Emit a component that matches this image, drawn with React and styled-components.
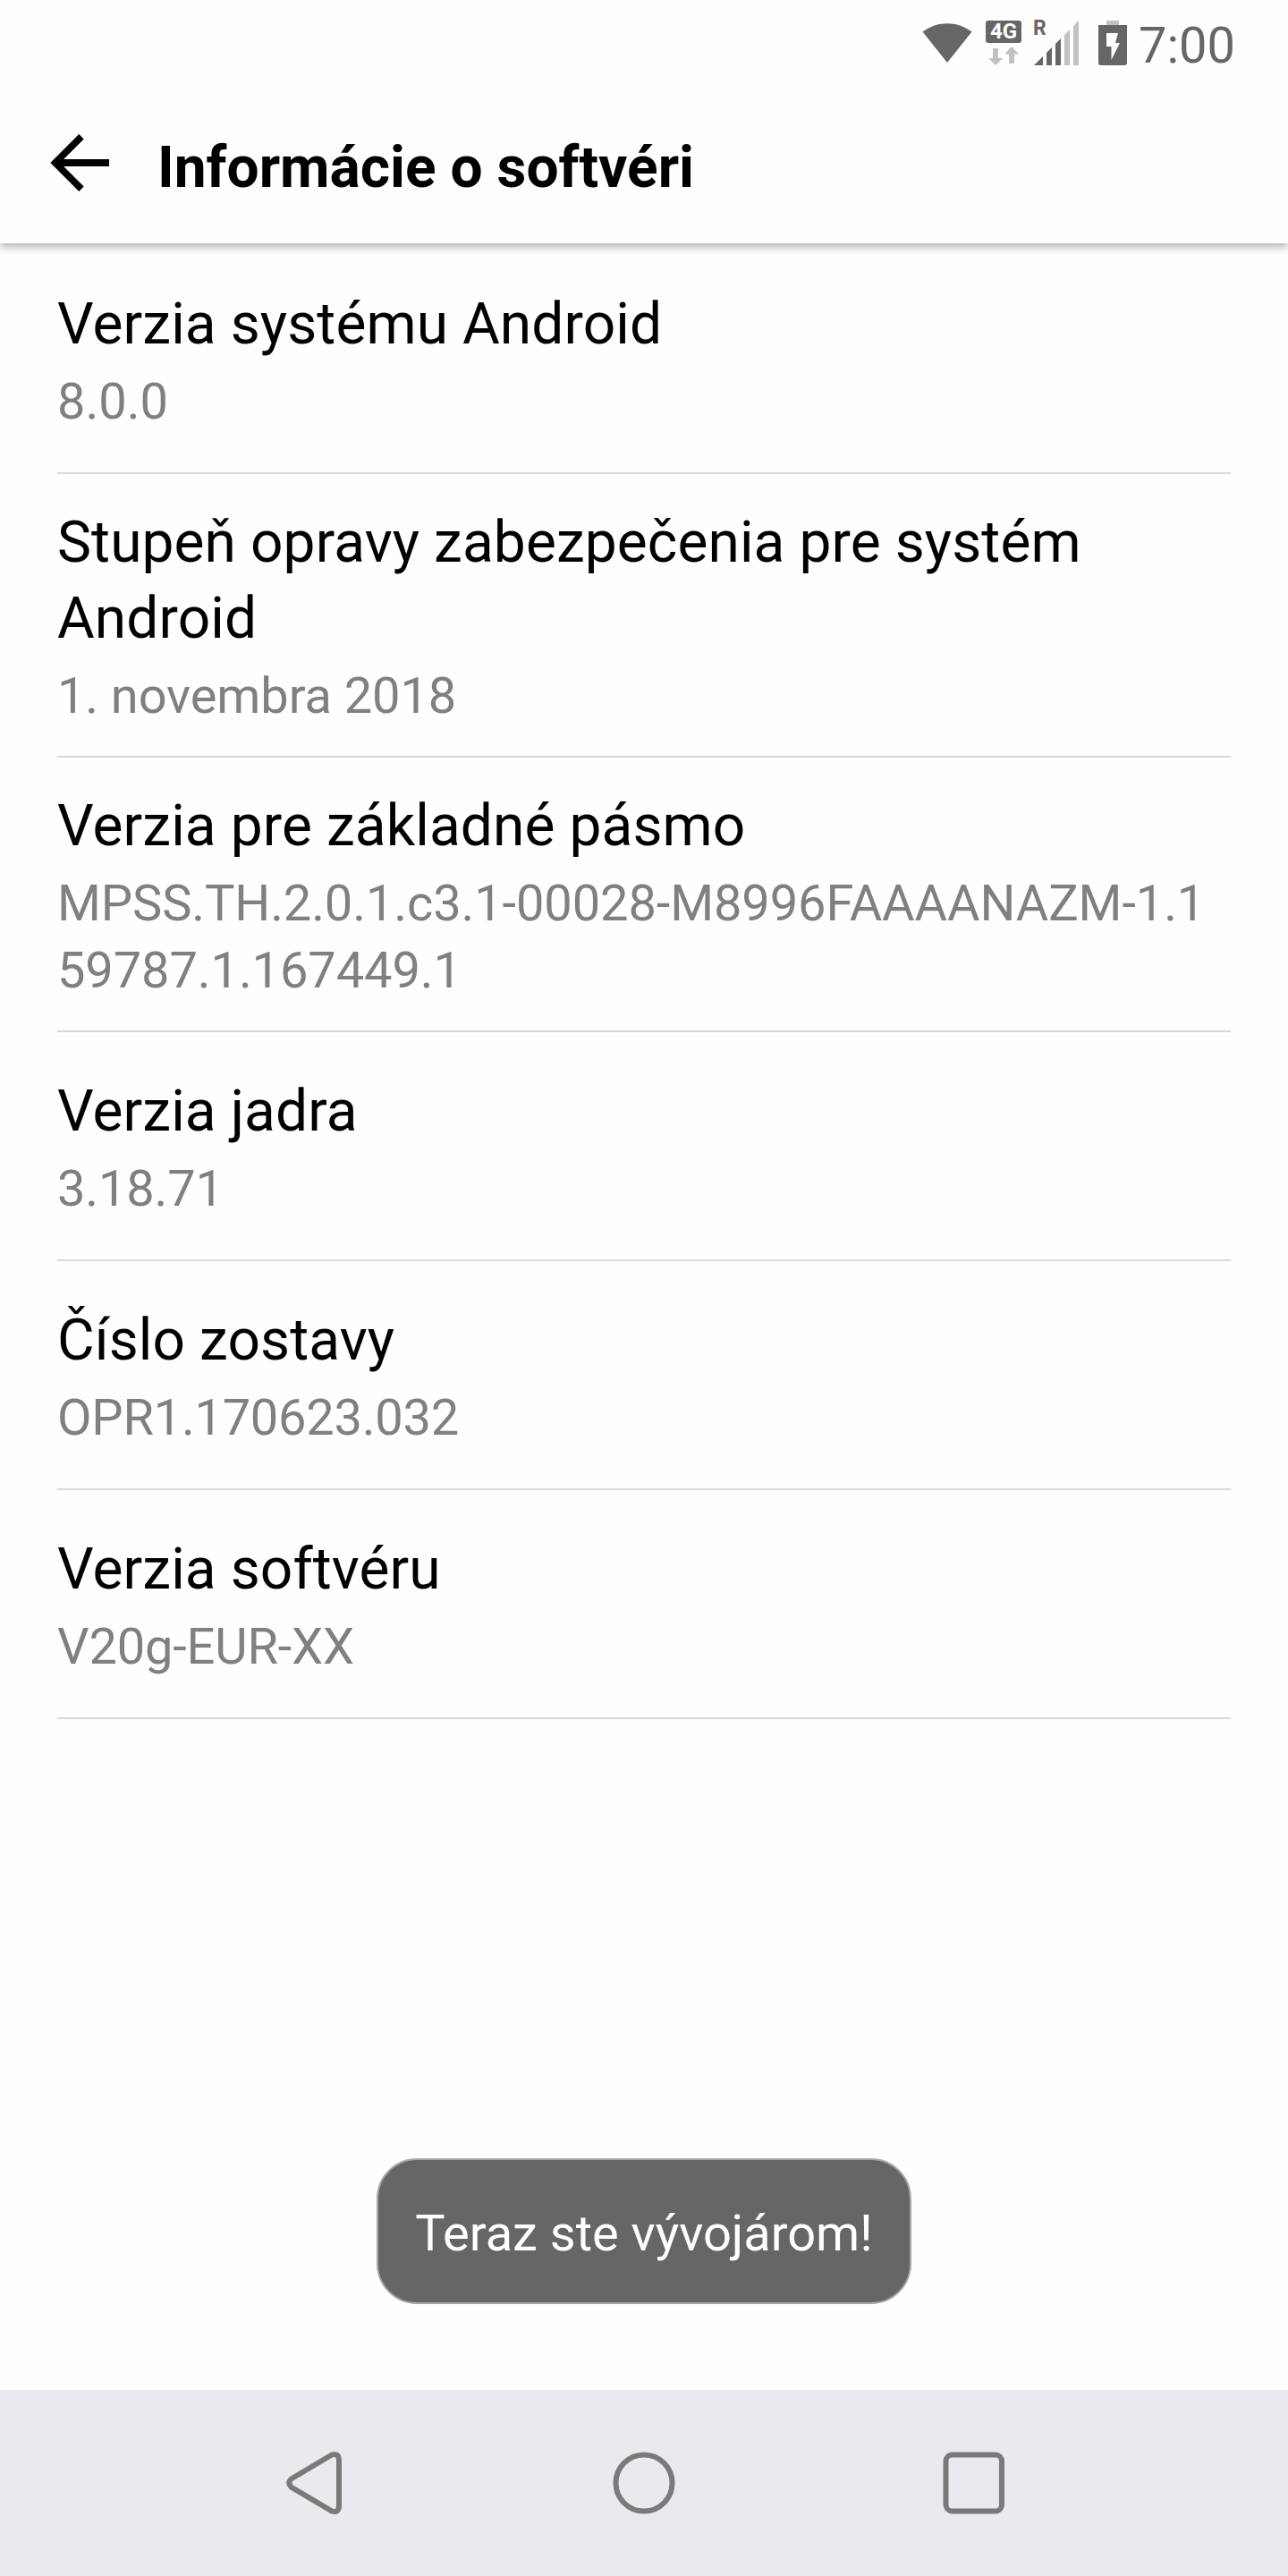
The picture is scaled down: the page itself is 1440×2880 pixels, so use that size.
import React from "react";
import styled, { createGlobalStyle } from "styled-components";

const GlobalStyle = createGlobalStyle`
  * {
    box-sizing: border-box;
  }
  body {
    margin: 0;
    background: #fefefe;
    font-family: Roboto, "Noto Sans", sans-serif;
  }
`;

// screen
const Screen = styled.div`
  position: relative;
  display: flex;
  flex-direction: column;
  width: 1440px;
  height: 2880px;
  background: #fefefe;
  overflow: hidden;
`;

// status bar
const StatusBar = styled.div`
  display: flex;
  justify-content: flex-end;
  align-items: flex-start;
  height: 96px;
  padding: 23px 59px 0 0;
  color: #666666;
`;

const StatusIcon = styled.svg`
  display: block;
  flex: none;
  margin-right: ${(props) => props.$gap}px;
`;

const Network = styled.div`
  display: flex;
  flex-direction: column;
  align-items: center;
  width: 40px;
  margin-right: 14px;
`;

const NetworkType = styled.div`
  width: 40px;
  height: 25px;
  border-radius: 3px;
  background: #666666;
  color: #fefefe;
  font-size: 24px;
  font-weight: 700;
  line-height: 25px;
  text-align: center;
`;

const Signal = styled.div`
  position: relative;
`;

const Roaming = styled.span`
  position: absolute;
  left: -1px;
  top: -3px;
  font-size: 23px;
  font-weight: 700;
  line-height: 23px;
`;

const Clock = styled.div`
  margin-top: -5px;
  font-size: 56px;
  line-height: 66px;
`;

// header
const Header = styled.header`
  display: flex;
  align-items: center;
  flex: none;
  height: 176px;
  padding-left: 56px;
  background: #fefefe;
  box-shadow: 0 4px 9px rgba(0, 0, 0, 0.3);
  clip-path: inset(0 0 -16px 0);
`;

const BackArrow = styled.svg`
  display: block;
  flex: none;
  margin: -4px 53px 0 0;
`;

const HeaderTitle = styled.h1`
  margin: 8px 0 0;
  color: #000000;
  font-size: 64px;
  font-weight: 700;
  line-height: 84px;
`;

// list
const List = styled.ul`
  flex: 1;
  margin: 0;
  padding: 2px 64px 0;
  list-style: none;
`;

const Item = styled.li`
  display: flex;
  flex-direction: column;
  justify-content: center;
  gap: 7px;
  min-height: 256px;
  padding: 34px 0 29px;
  border-bottom: 2px solid #d9d9d9;
`;

const ItemTitle = styled.div`
  color: #000000;
  font-size: 64px;
  line-height: 85px;
  letter-spacing: 0.1px;
`;

const ItemValue = styled.div`
  color: #808080;
  font-size: 56px;
  line-height: 75px;
  letter-spacing: ${(props) => props.$tracking}px;
  word-break: break-all;
`;

// toast
const Toast = styled.div`
  position: absolute;
  left: 50%;
  bottom: 304px;
  transform: translateX(-50%);
  display: flex;
  align-items: center;
  justify-content: center;
  width: 598px;
  height: 163px;
  padding-top: 4px;
  border: 2px solid #a6a6a6;
  border-radius: 45px;
  background: #666666;
  color: #ffffff;
  font-size: 56px;
  white-space: nowrap;
`;

// navigation bar
const NavBar = styled.nav`
  display: flex;
  flex: none;
  justify-content: space-between;
  align-items: center;
  height: 208px;
  padding: 0 312px;
  background: #e9eaed;
`;

const NavIcon = styled.svg`
  display: block;
  fill: none;
  stroke: #797b7a;
  stroke-width: 6;
`;

const items = [
  { title: "Verzia systému Android", value: "8.0.0", tracking: 0 },
  { title: "Stupeň opravy zabezpečenia pre systém Android", value: "1. novembra 2018", tracking: -0.1 },
  { title: "Verzia pre základné pásmo", value: "MPSS.TH.2.0.1.c3.1-00028-M8996FAAAANAZM-1.159787.1.167449.1", tracking: -0.1 },
  { title: "Verzia jadra", value: "3.18.71", tracking: -0.15 },
  { title: "Číslo zostavy", value: "OPR1.170623.032", tracking: -0.24 },
  { title: "Verzia softvéru", value: "V20g-EUR-XX", tracking: -0.18 },
];

const App = () => {
  return (
    <>
      <GlobalStyle />
      <Screen>
        <StatusBar>
          {/* wifi */}
          <StatusIcon $gap={15} width="56" height="50" viewBox="0 0 56 50">
            <path d="M0.5 12.5C17 0 39 0 55.5 12.5L28 47Z" fill="#666666" />
          </StatusIcon>
          <Network>
            <NetworkType>4G</NetworkType>
            <svg width="34" height="26" viewBox="0 0 34 26">
              <path d="M5 6h6v11h5.5L8 25 0 17h5Z" fill="#c2c2c2" />
              <path d="M26 4l8 8.5h-5V23h-6V12.5h-5Z" fill="#c2c2c2" />
            </svg>
          </Network>
          {/* signal */}
          <Signal>
            <Roaming>R</Roaming>
            <StatusIcon $gap={22} width="50" height="50" viewBox="0 0 50 50">
              <path d="M0 50L10 40V50ZM14 50V36L20 30V50ZM24 50V26L30 20V50Z" fill="#666666" />
              <path d="M34 50V16L40 10V50ZM44 50V6L50 0V50Z" fill="#c2c2c2" />
            </StatusIcon>
          </Signal>
          {/* battery */}
          <StatusIcon $gap={13} width="32" height="50" viewBox="0 0 32 50">
            <path d="M9 0h14v5H9Z" fill="#c2c2c2" />
            <path d="M0 5h32v42a3 3 0 0 1-3 3H3a3 3 0 0 1-3-3Z" fill="#666666" />
            <path d="M9 14h13l-3 11h5L14.5 44V29H9Z" fill="#fefefe" />
          </StatusIcon>
          <Clock>7:00</Clock>
        </StatusBar>

        <Header>
          <BackArrow width="67" height="64" viewBox="0 0 67 64">
            <path d="M35 2.7L5.7 32L35 61.3" fill="none" stroke="#000000" strokeWidth="7.6" />
            <path d="M6 32H66" stroke="#000000" strokeWidth="8" />
          </BackArrow>
          <HeaderTitle>Informácie o softvéri</HeaderTitle>
        </Header>

        <List>
          {items.map((item) => (
            <Item key={item.title}>
              <ItemTitle>{item.title}</ItemTitle>
              <ItemValue $tracking={item.tracking}>{item.value}</ItemValue>
            </Item>
          ))}
        </List>

        <Toast>Teraz ste vývojárom!</Toast>

        <NavBar>
          <NavIcon width="80" height="80" viewBox="0 0 80 80">
            <path d="M13.5 35.5L59 8.5Q67 6 67 15V65Q67 74 59 71.5L13.5 44.5Q9 40 13.5 35.5Z" />
          </NavIcon>
          <NavIcon width="80" height="80" viewBox="0 0 80 80">
            <circle cx="40" cy="40" r="31.5" />
          </NavIcon>
          <NavIcon width="80" height="80" viewBox="0 0 80 80">
            <rect x="9.5" y="8.5" width="62.5" height="63" rx="7" />
          </NavIcon>
        </NavBar>
      </Screen>
    </>
  );
};

export default App;
